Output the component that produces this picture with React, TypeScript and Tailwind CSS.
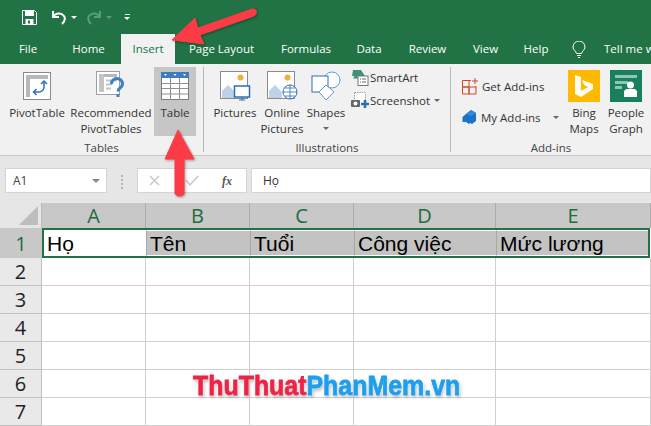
import React from "react";

const ui = "font-['Open_Sans','Noto_Sans',sans-serif]";

function Arrow({ d, className }: { d: string; className: string }) {
  return (
    <svg className={className} viewBox="0 0 651 426" width="651" height="426">
      <path d={d} fill="#fb3b45" stroke="#fb3b45" strokeWidth="1" strokeLinejoin="round" />
    </svg>
  );
}

function Pivot() {
  return (
    <svg width="28" height="28" viewBox="0 0 28 28">
      <rect x="0.500" y="0.500" width="27" height="27" fill="#fff" stroke="#8a8a8a" />
      <rect x="3" y="3" width="22" height="4" fill="#b8b8b8" />
      <rect x="3" y="3" width="4" height="22" fill="#b8b8b8" />
      <path d="M21 10v5a5 5 0 0 1-5 5h-5" fill="none" stroke="#2a6fb5" strokeWidth="1.500" />
      <path d="M18 12l3-3 3 3M13.500 17l-3 3 3 3" fill="none" stroke="#2a6fb5" strokeWidth="1.500" />
    </svg>
  );
}
function Recommended() {
  return (
    <svg width="30" height="30" viewBox="0 0 30 30">
      <rect x="0.500" y="0.500" width="23" height="23" fill="#fff" stroke="#a0a0a0" />
      <rect x="3" y="3" width="18" height="3" fill="#b8b8b8" />
      <rect x="3" y="3" width="5" height="18" fill="#c4c4c4" />
      <path d="M10 9.500h11M10 13.500h6M10 17.500h5" stroke="#c4c4c4" strokeWidth="2" />
      <path d="M15.500 13a5.500 5 0 1 1 9 3.500c-1.500 1.200-2.500 2-2.500 4" fill="none" stroke="#3d80c4" strokeWidth="3" />
      <rect x="20.500" y="23" width="3" height="3" fill="#3d80c4" />
    </svg>
  );
}
function TableIcon() {
  return (
    <svg width="28" height="28" viewBox="0 0 28 28">
      <rect x="0.500" y="0.500" width="27" height="27" fill="#fff" stroke="#7d7d7d" />
      <rect x="0" y="0" width="28" height="6" fill="#3f7cbd" />
      <path d="M3 2l1.500 2L6 2zM12.500 2l1.500 2 1.500-2zM22 2l1.500 2L25 2z" fill="#fff" />
      <path d="M9.500 6v22M18.500 6v22M1 11.500h26M1 16.500h26M1 22h26" stroke="#8f8f8f" />
    </svg>
  );
}
function PictureBase({ children }: { children: React.ReactNode }) {
  return (
    <svg width="31" height="30" viewBox="0 0 31 30">
      <rect x="0.500" y="0.500" width="27" height="27" fill="#fff" stroke="#8a8a8a" />
      <circle cx="20.500" cy="6.500" r="3" fill="#eeb040" />
      <path d="M2 27v-7l6-6 7 7v6z" fill="#bdd2e8" />
      {children}
    </svg>
  );
}
function Shapes() {
  return (
    <svg width="31" height="30" viewBox="0 0 31 30">
      <circle cx="21" cy="9" r="8" fill="#fff" stroke="#5d9bd5" />
      <rect x="1" y="5" width="16" height="16" fill="#fff" stroke="#2a6fb5" />
      <path d="M15 14l8 7-8 8-7-8z" fill="#fff" stroke="#5d9bd5" />
    </svg>
  );
}
function SmartArt() {
  return (
    <svg width="18" height="16" viewBox="0 0 18 16">
      <path d="M2 0h8l4 6H6l1.500 2.500H2L3.500 6H1z" fill="#3f9277" />
      <rect x="7" y="6" width="10" height="9.500" fill="#fff" stroke="#777" />
      <path d="M9 9h1M9 12h1M11 9h4M11 12h4" stroke="#666" />
    </svg>
  );
}
function Screenshot() {
  return (
    <svg width="18" height="17" viewBox="0 0 18 17">
      <rect x="3.500" y="0.500" width="11" height="11" fill="#fff" stroke="#9a9a9a" strokeDasharray="1.500 1" />
      <rect x="0" y="8" width="9" height="7" rx="1" fill="#666" />
      <circle cx="4.500" cy="11.500" r="2" fill="#fff" />
      <path d="M14 8v8M10 12h8" stroke="#2a6fb5" strokeWidth="2.500" />
    </svg>
  );
}
function GetAddins() {
  return (
    <svg width="17" height="17" viewBox="0 0 17 17">
      <path d="M.5 2.500h6.500v6.500H.5zM7 9h7v7H7zM.5 9H7v7H.5z" fill="none" stroke="#d24726" />
      <path d="M13 0v6M10 3h6" fill="none" stroke="#d24726" />
      <path d="M7 2.500h2M14 9V8" stroke="#d24726" />
    </svg>
  );
}
function MyAddins() {
  return (
    <svg width="15" height="15" viewBox="0 0 15 15">
      <path d="M4 4l5-4 5 3v8l-4 3-2-1-1 1-3-2-3.500 0v-5z" fill="#1a73c7" />
      <path d="M9 0l5 3-5 3-5-2z" fill="#2f8ddb" />
    </svg>
  );
}
function Bing() {
  return (
    <svg width="32" height="32" viewBox="0 0 32 32">
      <rect width="32" height="32" fill="#ffb900" />
      <path d="M7 5l6 2v14l7-4-4-2-2-5 11 4v5L13 27l-6-3z" fill="#fff" opacity="0.950" />
    </svg>
  );
}
function People() {
  return (
    <svg width="32" height="32" viewBox="0 0 32 32">
      <rect width="32" height="32" fill="#18805c" />
      <rect x="5" y="5" width="22" height="3" fill="#8fc7b1" />
      <rect x="5" y="11" width="13" height="3" fill="#8fc7b1" />
      <rect x="5" y="16" width="7" height="3" fill="#8fc7b1" />
      <circle cx="20.500" cy="15" r="3.500" fill="#fff" />
      <path d="M14 27v-5c0-2 2-3 3-3h7c1 0 3 1 3 3v5z" fill="#fff" />
    </svg>
  );
}

function Big({ icon, lines, w, caret, active }: { icon: React.ReactNode; lines: string[]; w: string; caret?: boolean; active?: boolean }) {
  return (
    <div className={`flex flex-col items-center shrink-0 h-[69px] pt-[3px] ${w} ${active ? "bg-[#c6c6c6]" : ""}`}>
      <div className="h-[32px] shrink-0 flex items-center justify-center">{icon}</div>
      <div className="mt-[3px] text-center leading-[16px]">
        {lines.map((l) => (
          <div key={l} className="whitespace-nowrap">{l}</div>
        ))}
        {caret && <div className="flex justify-center pt-[6px]"><div className="w-0 h-0 border-x-[3px] border-x-transparent border-t-[3px] border-t-[#666]" /></div>}
      </div>
    </div>
  );
}

function Group({ w, label, children, end }: { w: string; label: string; children: React.ReactNode; end?: boolean }) {
  return (
    <div className={`${w} shrink-0 h-[85px] mt-[3px] flex flex-col ${end ? "" : "border-r border-[#b8b8b8]"}`}>
      <div className="h-[69px] shrink-0 flex">{children}</div>
      <div className="h-[20px] shrink-0 pt-[4px] text-center leading-[16px] text-[#444]">{label}</div>
    </div>
  );
}

const cols = [
  { n: "A", w: "w-[104px]", t: "Họ" },
  { n: "B", w: "w-[104px]", t: "Tên" },
  { n: "C", w: "w-[104px]", t: "Tuổi" },
  { n: "D", w: "w-[142px]", t: "Công việc" },
  { n: "E", w: "w-[155px]", t: "Mức lương" },
];

const tabs: [string, string][] = [
  ["File", "w-[56px]"],
  ["Home", "w-[65px]"],
  ["Insert", "w-[54px]"],
  ["Page Layout", "w-[93px]"],
  ["Formulas", "w-[76px]"],
  ["Data", "w-[50px]"],
  ["Review", "w-[67px]"],
  ["View", "w-[49px]"],
  ["Help", "w-[52px]"],
];

export default function App() {
  return (
    <div className={`relative w-[651px] h-[426px] overflow-hidden bg-white text-[11.5px] text-[#333] ${ui}`}>
      {/* title bar */}
      <div className="h-[34px] bg-[#217346] flex items-center pl-[22px]">
        <svg width="15" height="15" viewBox="0 0 15 15">
          <path d="M.5.500h12l2 2v12H.5z" fill="#217346" stroke="#fff" />
          <rect x="3" y="1" width="9" height="5" fill="#fff" />
          <rect x="3.500" y="9" width="8" height="5.500" fill="#fff" />
          <rect x="6" y="10.500" width="2" height="3" fill="#217346" />
        </svg>
        <svg className="ml-[14px]" width="16" height="15" viewBox="0 0 16 15">
          <path d="M2 1v6h6M2 7c2-4 8-5 11-1 2 3 0 6-2 8" fill="none" stroke="#fff" strokeWidth="2" />
        </svg>
        <div className="ml-[4px] w-0 h-0 border-x-[3px] border-x-transparent border-t-[3px] border-t-white" />
        <svg className="ml-[9px]" width="16" height="15" viewBox="0 0 16 15">
          <path d="M14 1v6H8M14 7c-2-4-8-5-11-1-2 3 0 6 2 8" fill="none" stroke="#5b9a7c" strokeWidth="2" />
        </svg>
        <div className="ml-[4px] w-0 h-0 border-x-[3px] border-x-transparent border-t-[3px] border-t-[#5b9a7c]" />
        <div className="ml-[12px] flex flex-col items-center gap-[2px]">
          <div className="w-[5px] h-px bg-white" />
          <div className="w-0 h-0 border-x-[3px] border-x-transparent border-t-[3px] border-t-white" />
        </div>
      </div>
      {/* tabs */}
      <div className="h-[30px] bg-[#217346] flex text-white">
        {tabs.map(([t, w]) => (
          <div key={t} className={`${w} shrink-0 flex items-center justify-center ${t === "Insert" ? "bg-[#f1f1f1] text-[#217346]" : ""}`}>
            {t}
          </div>
        ))}
        <svg className="ml-[10px] mt-[7px] shrink-0" width="14" height="18" viewBox="0 0 14 18">
          <path d="M4.500 12.500C4 10 1 9 1 6a6 6 0 0 1 12 0c0 3-3 4-3.500 6.500zM5 14.500h4M6 16.500h2" fill="none" stroke="#fff" />
        </svg>
        <div className="ml-[18px] flex items-center whitespace-nowrap">Tell me w</div>
      </div>
      {/* ribbon */}
      <div className="h-[92px] bg-[#f1f1f1] border-b border-[#c8c8c8] flex">
        <Group w="w-[204px]" label="Tables">
          <Big icon={<Pivot />} lines={["PivotTable"]} w="w-[66px] ml-[4px]" />
          <Big icon={<Recommended />} lines={["Recommended", "PivotTables"]} w="w-[82px]" />
          <Big icon={<TableIcon />} lines={["Table"]} w="w-[42px] ml-[2px]" active />
        </Group>
        <Group w="w-[247px]" label="Illustrations">
          <Big icon={<PictureBase><rect x="14.500" y="15" width="15" height="11" fill="#fff" stroke="#2a6fb5" strokeWidth="1.500" /><path d="M19 29h6M22 26v3" stroke="#2a6fb5" /></PictureBase>} lines={["Pictures"]} w="w-[46px] ml-[8px]" />
          <Big icon={<PictureBase><circle cx="23" cy="21" r="7" fill="#fff" stroke="#2a6fb5" /><path d="M16 21h14M23 14v14M18 17h10M18 25h10" stroke="#2a6fb5" strokeWidth="0.800" /></PictureBase>} lines={["Online", "Pictures"]} w="w-[48px]" />
          <Big icon={<Shapes />} lines={["Shapes"]} w="w-[40px]" caret />
          <div className="flex flex-col pl-[5px] pt-[2px] gap-[6px] whitespace-nowrap">
            <div className="flex items-center gap-[1px] h-[17px]"><SmartArt /><span>SmartArt</span></div>
            <div className="flex items-center gap-[1px] h-[17px]"><Screenshot /><span>Screenshot</span><div className="ml-[3px] w-0 h-0 border-x-[3px] border-x-transparent border-t-[3px] border-t-[#666]" /></div>
          </div>
        </Group>
        <Group w="flex-1" label="Add-ins" end>
          <div className="w-[112px] shrink-0 flex flex-col pl-[11px] pt-[11px] gap-[14px] whitespace-nowrap">
            <div className="flex items-center gap-[3px] h-[17px]"><GetAddins /><span>Get Add-ins</span></div>
            <div className="flex items-center gap-[4px] h-[17px]"><MyAddins /><span>My Add-ins</span><div className="ml-[8px] w-0 h-0 border-x-[3px] border-x-transparent border-t-[3px] border-t-[#666]" /></div>
          </div>
          <Big icon={<Bing />} lines={["Bing", "Maps"]} w="w-[42px]" />
          <Big icon={<People />} lines={["People", "Graph"]} w="w-[42px]" />
        </Group>
      </div>
      {/* formula bar */}
      <div className="h-[47px] bg-[#e6e6e6] flex items-start pt-[12px] text-[12px]">
        <div className="ml-[5px] w-[102px] h-[25px] bg-white border border-[#d4d4d4] flex items-center justify-between pl-[7px] pr-[6px] text-[#444]">
          <span>A1</span>
          <div className="w-0 h-0 border-x-[4px] border-x-transparent border-t-[4px] border-t-[#888]" />
        </div>
        <div className="ml-[14px] mt-[7px] flex flex-col gap-[2px]">
          <div className="w-[2px] h-[2px] bg-[#b4b4b4]" />
          <div className="w-[2px] h-[2px] bg-[#b4b4b4]" />
          <div className="w-[2px] h-[2px] bg-[#b4b4b4]" />
          <div className="w-[2px] h-[2px] bg-[#b4b4b4]" />
        </div>
        <div className="ml-[14px] w-[110px] h-[25px] bg-white border border-[#d4d4d4] flex items-center pl-[11px]">
          <svg width="11" height="11" viewBox="0 0 11 11"><path d="M1 1l9 9M10 1l-9 9" stroke="#c8c8c8" strokeWidth="1.500" /></svg>
          <svg className="ml-[25px]" width="14" height="11" viewBox="0 0 14 11"><path d="M1 5l4 5 8-9" fill="none" stroke="#c8c8c8" strokeWidth="1.500" /></svg>
          <span className="ml-[23px] font-['Liberation_Serif',serif] italic font-bold text-[12px] text-[#555]">fx</span>
        </div>
        <div className="ml-[4px] flex-1 h-[25px] bg-white border border-[#d4d4d4] flex items-center pl-[11px] text-[#333]">Họ</div>
      </div>
      {/* sheet */}
      <div className="font-['Liberation_Sans',Arial,sans-serif] text-[21px] text-black">
        <div className="flex h-[25px]">
          <div className="w-[42px] shrink-0 bg-[#e6e6e6] border-r border-[#bbb] flex items-end justify-end pr-[3px] pb-[3px]">
            <div className="w-0 h-0 border-b-[19px] border-b-[#bdbdbd] border-l-[19px] border-l-transparent" />
          </div>
          {cols.map((c) => (
            <div key={c.n} className={`${c.w} shrink-0 bg-[#c8c8c8] border-r border-[#ababab] flex items-center justify-center text-[20px] text-[#1d6b41] ${ui}`}>{c.n}</div>
          ))}
        </div>
        <div className="flex h-[30px] w-[650px]">
          <div className={`w-[42px] shrink-0 bg-[#c8c8c8] text-[20px] text-[#1d6b41] flex items-center justify-center pt-[2px] ${ui}`}>1</div>
          <div className="flex flex-1 min-w-0 border-2 border-[#217346]">
            {cols.map((c, i) => (
              <div key={c.n} className={`${i === 0 ? "w-[102px] bg-white shrink-0" : i === 4 ? "flex-1 min-w-0 bg-[#c3c3c3] border-l border-[#a8a8a8] border-y border-y-white" : c.w + " shrink-0 bg-[#c3c3c3] border-l border-[#a8a8a8] border-y border-y-white"} flex items-center pl-[3px] pt-[2px] whitespace-nowrap overflow-hidden`}>{c.t}</div>
            ))}
          </div>
        </div>
        {["2", "3", "4", "5", "6", "7"].map((r) => (
          <div key={r} className="flex h-[28px]">
            <div className={`w-[42px] shrink-0 bg-[#e9e9e9] border-r border-b border-[#c0c0c0] flex items-center justify-center text-[20px] text-[#222] ${ui}`}>{r}</div>
            {cols.map((c) => (
              <div key={c.n} className={`${c.w} shrink-0 border-r border-b border-[#d0d0d0]`} />
            ))}
          </div>
        ))}
      </div>

      {/* annotation arrows */}
      <Arrow className="absolute left-0 top-0 pointer-events-none drop-shadow-[1px_1px_1px_rgba(0,0,0,0.35)]" d="M172 40 L195 18 L198 28 L252 9 C257 8 258 14 254 16 L200 35 L204 44 Z" />
      <Arrow className="absolute left-0 top-0 pointer-events-none drop-shadow-[1px_1px_1px_rgba(0,0,0,0.35)]" d="M178 130 L194 159 L184 159 L184 193 C184 197 175 197 175 193 L175 159 L165 159 Z" />

      {/* watermark */}
      <div className="absolute left-[193px] top-[370px] origin-left scale-x-[0.89] font-['Liberation_Sans',sans-serif] font-bold text-[28px] leading-[32px] whitespace-nowrap [-webkit-text-stroke:0.8px_currentColor] [text-shadow:0_0_3px_#fff,0_0_3px_#fff,1px_2px_4px_rgba(0,0,0,0.45)]">
        <span className="text-[#ee2446]">ThuThuat</span>
        <span className="text-[#1d9fee]">PhanMem.vn</span>
      </div>
    </div>
  );
}
